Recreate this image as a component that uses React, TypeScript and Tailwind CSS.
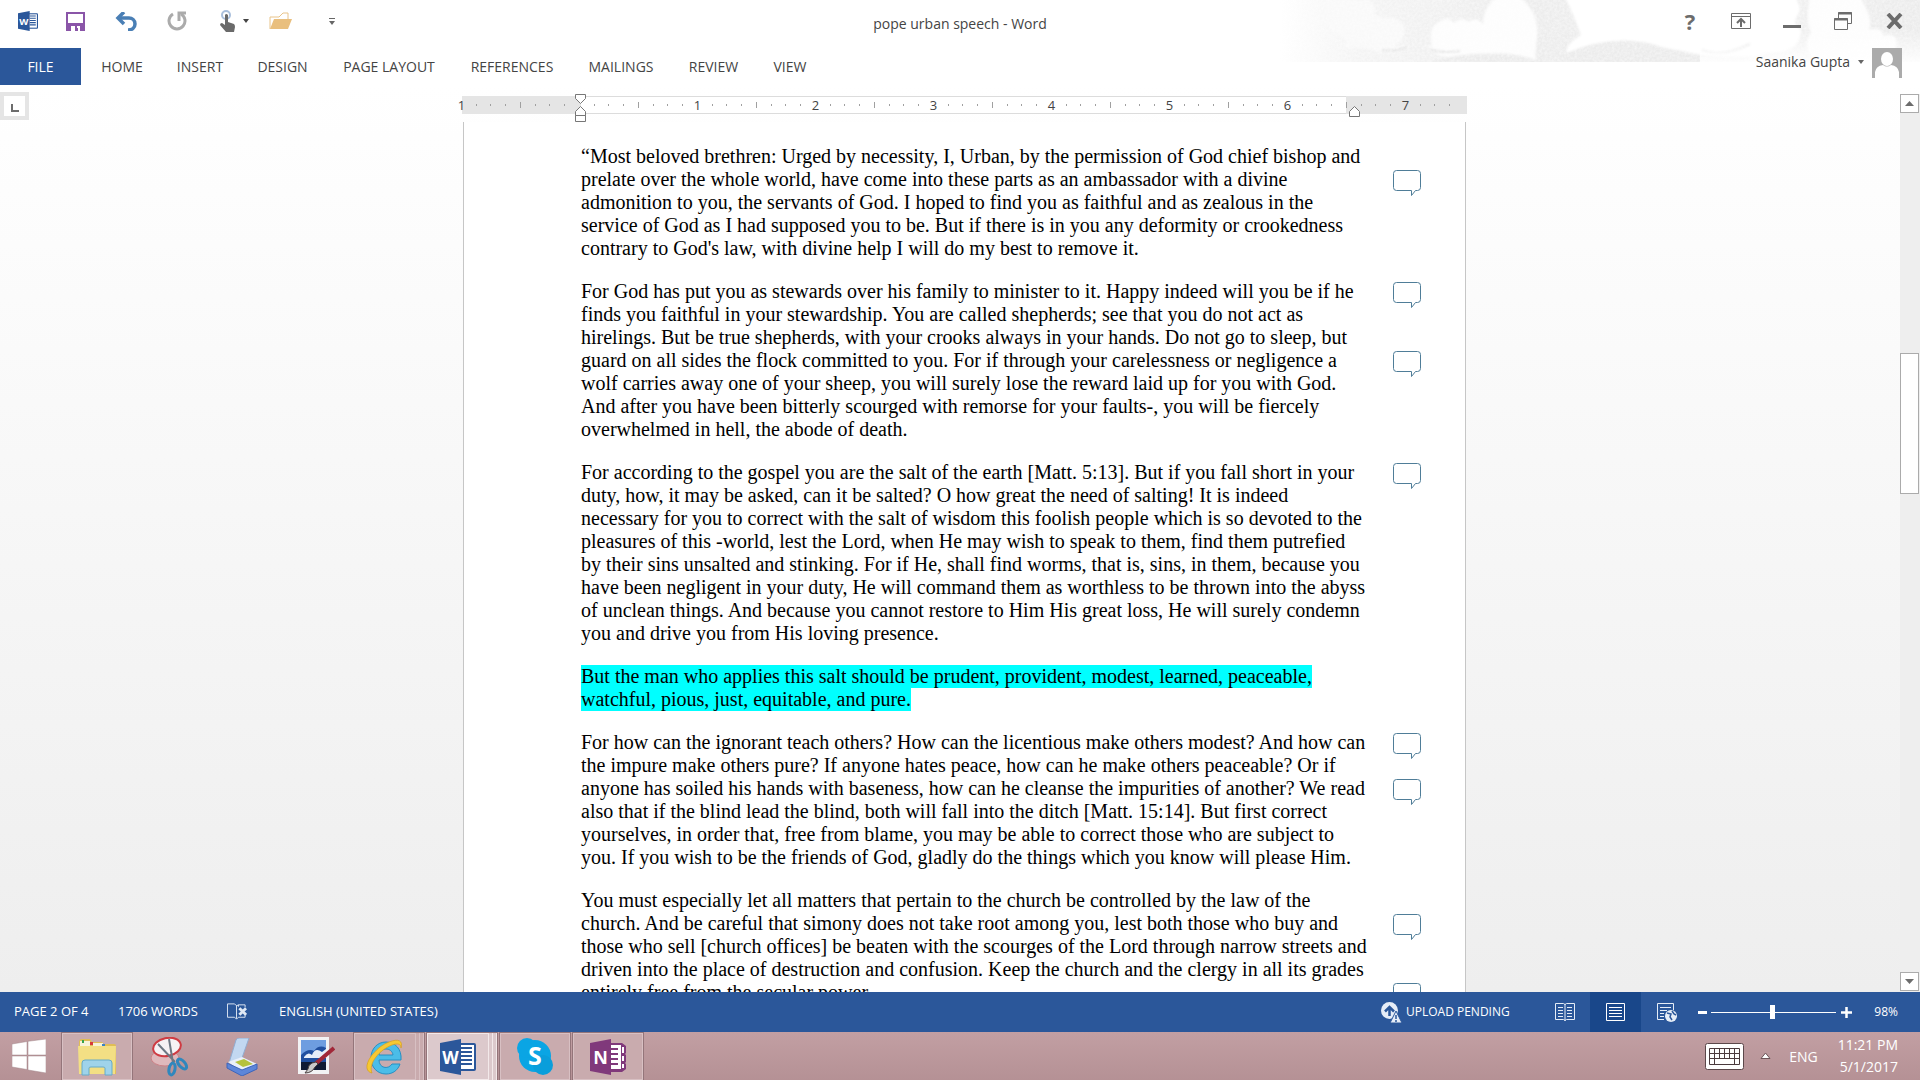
import type { ReactNode } from "react";

type Line = { text: string; comment?: boolean };
type Paragraph = { highlighted?: boolean; lines: Line[] };

const paragraphs: Paragraph[] = [
  {
    lines: [
      { text: "“Most beloved brethren: Urged by necessity, I, Urban, by the permission of God chief bishop and" },
      { text: "prelate over the whole world, have come into these parts as an ambassador with a divine", comment: true },
      { text: "admonition to you, the servants of God. I hoped to find you as faithful and as zealous in the" },
      { text: "service of God as I had supposed you to be. But if there is in you any deformity or crookedness" },
      { text: "contrary to God's law, with divine help I will do my best to remove it." },
    ],
  },
  {
    lines: [
      { text: "For God has put you as stewards over his family to minister to it. Happy indeed will you be if he", comment: true },
      { text: "finds you faithful in your stewardship. You are called shepherds; see that you do not act as" },
      { text: "hirelings. But be true shepherds, with your crooks always in your hands. Do not go to sleep, but" },
      { text: "guard on all sides the flock committed to you. For if through your carelessness or negligence a", comment: true },
      { text: "wolf carries away one of your sheep, you will surely lose the reward laid up for you with God." },
      { text: "And after you have been bitterly scourged with remorse for your faults-, you will be fiercely" },
      { text: "overwhelmed in hell, the abode of death." },
    ],
  },
  {
    lines: [
      { text: "For according to the gospel you are the salt of the earth [Matt. 5:13]. But if you fall short in your", comment: true },
      { text: "duty, how, it may be asked, can it be salted? O how great the need of salting! It is indeed" },
      { text: "necessary for you to correct with the salt of wisdom this foolish people which is so devoted to the" },
      { text: "pleasures of this -world, lest the Lord, when He may wish to speak to them, find them putrefied" },
      { text: "by their sins unsalted and stinking. For if He, shall find worms, that is, sins, in them, because you" },
      { text: "have been negligent in your duty, He will command them as worthless to be thrown into the abyss" },
      { text: "of unclean things. And because you cannot restore to Him His great loss, He will surely condemn" },
      { text: "you and drive you from His loving presence." },
    ],
  },
  {
    highlighted: true,
    lines: [
      { text: "But the man who applies this salt should be prudent, provident, modest, learned, peaceable," },
      { text: "watchful, pious, just, equitable, and pure." },
    ],
  },
  {
    lines: [
      { text: "For how can the ignorant teach others? How can the licentious make others modest? And how can", comment: true },
      { text: "the impure make others pure? If anyone hates peace, how can he make others peaceable? Or if" },
      { text: "anyone has soiled his hands with baseness, how can he cleanse the impurities of another? We read", comment: true },
      { text: "also that if the blind lead the blind, both will fall into the ditch [Matt. 15:14]. But first correct" },
      { text: "yourselves, in order that, free from blame, you may be able to correct those who are subject to" },
      { text: "you. If you wish to be the friends of God, gladly do the things which you know will please Him." },
    ],
  },
  {
    lines: [
      { text: "You must especially let all matters that pertain to the church be controlled by the law of the" },
      { text: "church. And be careful that simony does not take root among you, lest both those who buy and", comment: true },
      { text: "those who sell [church offices] be beaten with the scourges of the Lord through narrow streets and" },
      { text: "driven into the place of destruction and confusion. Keep the church and the clergy in all its grades" },
      { text: "entirely free from the secular power.", comment: true },
    ],
  },
];

const tabs = [
  { label: "HOME", width: "w-[76px]" },
  { label: "INSERT", width: "w-20" },
  { label: "DESIGN", width: "w-[85px]" },
  { label: "PAGE LAYOUT", width: "w-32" },
  { label: "REFERENCES", width: "w-[118px]" },
  { label: "MAILINGS", width: "w-[100px]" },
  { label: "REVIEW", width: "w-[85px]" },
  { label: "VIEW", width: "w-[68px]" },
];

const rulerLabels = ["1", "", "1", "2", "3", "4", "5", "6", "7"];

function IconButton({ label, className = "", children }: { label: string; className?: string; children: ReactNode }) {
  return (
    <button type="button" aria-label={label} className={`flex shrink-0 items-center justify-center ${className}`}>
      {children}
    </button>
  );
}

function WordLogo({ size }: { size: number }) {
  return (
    <svg width={size} height={size} viewBox="0 0 36 36" aria-hidden="true">
      <path d="M18 4h16a2 2 0 0 1 2 2v24a2 2 0 0 1-2 2H18z" fill="#2b579a" />
      <path d="M18 6h16v24H18z" fill="#fff" />
      <path d="M21 8h11v2H21zm0 4h11v2H21zm0 4h11v2H21zm0 4h11v2H21zm0 4h11v2H21z" fill="#2b579a" />
      <path d="M0 4 21 0v36L0 32z" fill="#2b579a" />
      <text x="10.5" y="24.5" textAnchor="middle" fontFamily="Open Sans" fontWeight="700" fontSize="17" fill="#fff">W</text>
    </svg>
  );
}

function OneNoteLogo() {
  return (
    <svg width="36" height="36" viewBox="0 0 36 36" aria-hidden="true">
      <path d="M18 4h14l4 3v7l-1 1 1 1v7l-1 1 1 1v5l-4 3H18z" fill="#80397b" />
      <path d="M20 6h11v24H20z" fill="#fff" />
      <path d="M20 9h8v2h-8zm0 5h8v2h-8zm0 5h8v2h-8zm0 5h8v2h-8z" fill="#80397b" />
      <path d="M32 8h2v6h-2zm0 9h2v5h-2zm0 8h2v4h-2z" fill="#fff" />
      <path d="M0 4 21 0v36L0 32z" fill="#80397b" />
      <text x="10.5" y="24.5" textAnchor="middle" fontFamily="Open Sans" fontWeight="700" fontSize="18" fill="#fff">N</text>
    </svg>
  );
}

function CloudArt() {
  return (
    <svg width="640" height="62" viewBox="0 0 640 62" className="pointer-events-none absolute right-0 top-0" aria-hidden="true">
      <defs>
        <linearGradient id="fade" x1="0" x2="1" y1="0" y2="0">
          <stop offset="0" stopColor="#fff" />
          <stop offset="0.12" stopColor="#f4f4f4" />
          <stop offset="0.4" stopColor="#ececec" />
          <stop offset="0.75" stopColor="#f1f1f1" />
          <stop offset="1" stopColor="#ebebeb" />
        </linearGradient>
        <linearGradient id="drop" x1="0" x2="0" y1="0" y2="1">
          <stop offset="0" stopColor="#fff" stopOpacity="0" />
          <stop offset="1" stopColor="#fff" stopOpacity="0.9" />
        </linearGradient>
        <filter id="grain" x="0" y="0" width="100%" height="100%">
          <feTurbulence type="fractalNoise" baseFrequency="0.4" numOctaves="2" />
          <feColorMatrix values="0 0 0 0 1  0 0 0 0 1  0 0 0 0 1  1.4 0 0 0 -0.4" />
        </filter>
        <filter id="soft"><feGaussianBlur stdDeviation="1" /></filter>
      </defs>
      <path d="M0 0h640v62H0z" fill="url(#fade)" />
      <g filter="url(#soft)">
        <path d="M42 0h48q7 8 4 17 7-3 10 2 8-4 14 2 8 4 6 14-1 6-10 11h16q-12 10-30 6-16-6-37-4 4-5 2-9Q36 22 42 0z" fill="#f9f9f9" />
        <path d="M240 -3q20 17 17 41-2 16-1 22-30-10-54-5-28 6-46-1-8-4-8-8h4q-4-20 7-24 8-7 15 1 8-7 15-1 8-6 14 3 0-18 14-28z" fill="#fdfdfd" />
        <path d="M285 -3h230q8 13 2 19-5 8 4 14 0 24-35 23-22 9-62 3-72-20-138-3 1-10 15-18-7-20-16-38z" fill="#fff" />
        <path d="M530 -3h50q14 23 9 33 12-4 15 6 11-4 13 6 0 15-24 20h-55q-18-12-7-30-6-12-1-35z" fill="#fdfdfd" />
        <path d="M422 50q20 8 48-6M150 49q12 5 30 2M102 50q14 2 25-3" fill="none" stroke="#e2e2e2" strokeWidth="2" />
        <path d="M286 53q54-22 98-5 36 10 86 9v5H280zM154 60q60-14 96 2H150z" fill="#ebebeb" />
      </g>
      <path d="M420 30h220v32H420z" fill="url(#drop)" />
      <path d="M0 0h640v62H0z" filter="url(#grain)" opacity="0.6" />
    </svg>
  );
}

function TitleBar() {
  return (
    <div className="flex h-12 items-center pb-3">
      <div className="flex h-full flex-1 items-center pl-3 pt-1.5">
        <IconButton label="Word" className="w-8"><WordLogo size={20} /></IconButton>
        <IconButton label="Save" className="ml-[15px] w-8">
          <svg width="19" height="19" viewBox="0 0 19 19">
            <path d="M0 0h19v19H0z" fill="#8a55a8" />
            <path d="M2 2h15v9H2zm3 12h9v5h-2v-3H9v3H5z" fill="#fff" />
            <path d="M9 14h2v4H9z" fill="#8a55a8" />
          </svg>
        </IconButton>
        <IconButton label="Undo" className="ml-[19px] w-8">
          <svg width="22" height="19" viewBox="0 0 22 19" fill="none" stroke="#4a7fb5" strokeWidth="3.5">
            <path d="M3 6h11c3 0 6 2 6 6s-3 6-7 6" />
            <path d="m9 0-6 6 6 6" />
          </svg>
        </IconButton>
        <IconButton label="Repeat" className="ml-[19px] w-8">
          <svg width="20" height="20" viewBox="0 0 20 20" fill="none" stroke="#ababab" strokeWidth="3">
            <path d="M6 3a8 8 0 1 0 8 0" />
            <path d="M12 10V2h7" />
          </svg>
        </IconButton>
        <IconButton label="Touch mode" className="ml-[23px] w-9 gap-2">
          <svg width="16" height="22" viewBox="0 0 16 22">
            <circle cx="7" cy="5" r="4" fill="none" stroke="#a9bfdc" strokeWidth="2" />
            <path d="M6 5q1-2 3 0v7l6 2q1 1 1 3l-1 5H7l-6-7q0-2 2-2l3 2z" fill="#6a6a6a" />
          </svg>
          <svg width="6" height="4" viewBox="0 0 6 4"><path d="M0 0h6L3 4z" fill="#444" /></svg>
        </IconButton>
        <IconButton label="Open" className="ml-3 w-8">
          <svg width="23" height="18" viewBox="0 0 23 18">
            <path d="M1 17V5h9l4-4h5v6" fill="none" stroke="#e9c48a" />
            <path d="M5 7h18l-4 10H1z" fill="#e9bf7e" />
          </svg>
        </IconButton>
        <IconButton label="Customize quick access toolbar" className="ml-[26px] w-5">
          <svg width="6" height="7" viewBox="0 0 6 7" fill="#666"><path d="M0 0h6v1H0zM0 3h6L3 7z" /></svg>
        </IconButton>
      </div>
      <h1 className="pt-3 text-[14px] leading-5">pope urban speech - Word</h1>
      <div className="relative flex h-full flex-1 items-center justify-end gap-[23px] pr-3 pt-1.5">
        <IconButton label="Help" className="w-7 text-[22px] font-bold leading-6 text-[#6c6c6c]">?</IconButton>
        <IconButton label="Ribbon display options" className="w-7">
          <svg width="20" height="16" viewBox="0 0 20 16" fill="none" stroke="#6c6c6c">
            <path d="M.5.5h19v15H.5zM0 3.5h20" />
            <path d="M10 14V6M6 10l4-4 4 4" strokeWidth="2" />
          </svg>
        </IconButton>
        <IconButton label="Minimize" className="w-7 pt-2.5">
          <span className="h-[3px] w-[18px] bg-[#6c6c6c]" />
        </IconButton>
        <IconButton label="Restore" className="w-7">
          <svg width="18" height="18" viewBox="0 0 18 18" fill="none" stroke="#6c6c6c">
            <path d="M4.5 6V.5h13v11H14M.5 6.5h13v11H.5z" />
            <path d="M4 1.5h14M0 7.5h14" strokeWidth="2" />
          </svg>
        </IconButton>
        <IconButton label="Close" className="w-7">
          <svg width="17" height="16" viewBox="0 0 17 16"><path d="m2 1 13 14M15 1 2 15" stroke="#6c6c6c" strokeWidth="4" /></svg>
        </IconButton>
      </div>
    </div>
  );
}

function RibbonTabs() {
  return (
    <div className="flex h-[37px]">
      <nav className="flex flex-1 text-[14px]">
        <button type="button" className="w-[81px] bg-[#2b579a] text-white">FILE</button>
        <div className="flex pl-[3px]">
          {tabs.map((tab) => (
            <button key={tab.label} type="button" className={`whitespace-nowrap ${tab.width}`}>
              {tab.label}
            </button>
          ))}
        </div>
      </nav>
      <button type="button" className="relative flex items-start gap-2 pr-[18px]">
        <span className="pt-0.5 text-[14px] leading-6">Saanika Gupta</span>
        <svg width="6" height="4" viewBox="0 0 6 4" className="mt-3"><path d="M0 0h6L3 4z" fill="#666" /></svg>
        <svg width="30" height="30" viewBox="0 0 30 30">
          <path d="M0 0h30v30H0z" fill="#ababab" />
          <ellipse cx="15" cy="11" rx="6" ry="7" fill="#fff" />
          <path d="M3 30V24q1-6 8-7 4 3 8 0 7 1 8 7v6z" fill="#fff" />
        </svg>
      </button>
    </div>
  );
}

function Ruler() {
  return (
    <div className="relative flex h-[18px] w-[1005px] shrink-0">
      <div className="w-[119px] bg-[#e5e5e5]" />
      <div className="flex-1 border-y border-[#dcdcdc] bg-white" />
      <div className="w-[121px] bg-[#e5e5e5]" />
      <div className="absolute inset-y-0 -left-2 right-1 flex overflow-hidden text-[13px] leading-[18px]">
        {rulerLabels.map((label, inch) => (
          <div key={inch} className="grid w-[118px] shrink-0 grid-cols-8 place-items-center">
            <span>{label}</span>
            {[1, 2, 3, 4, 5, 6, 7].map((eighth) => (
              <span key={eighth} className={eighth === 4 ? "h-1.5 w-px bg-[#a0a0a0]" : "h-0.5 w-px bg-[#a0a0a0]"} />
            ))}
          </div>
        ))}
      </div>
      <svg width="11" height="28" viewBox="0 0 11 28" className="absolute -top-0.5 left-[113px]" fill="#fff" stroke="#777">
        <path d="M.5.5h10v4l-5 5-5-5zM.5 21.5v-4l5-5 5 5v4zM.5 21.5h10v6H.5z" />
      </svg>
      <svg width="11" height="11" viewBox="0 0 11 11" className="absolute left-[887px] top-2.5" fill="#fff" stroke="#777">
        <path d="M.5 10.5v-5l5-5 5 5v5z" />
      </svg>
    </div>
  );
}

function CommentButton() {
  return (
    <button type="button" aria-label="Show comment" className="absolute left-[812px] top-0.5">
      <svg width="28" height="27" viewBox="0 0 28 27" fill="none" stroke="#4f7d98">
        <path d="M3.5.5h21q3 0 3 3v14q0 3-3 3h-2l-4 5v-5h-15q-3 0-3-3v-14q0-3 3-3z" />
      </svg>
    </button>
  );
}

function Page() {
  return (
    <article className="mt-2 flex w-[1003px] flex-1 flex-col gap-5 overflow-hidden border-x border-[#c6c6c6] bg-white pl-[117px] pt-[23px] font-['Liberation_Serif',serif] text-[20px] leading-[23px] text-black">
      {paragraphs.map((paragraph, index) => (
        <p key={index}>
          {paragraph.lines.map((line) => (
            <span key={line.text} className="relative block whitespace-nowrap">
              <span className={paragraph.highlighted ? "inline-block bg-[#00ffff]" : ""}>{line.text}</span>
              {line.comment ? <CommentButton /> : null}
            </span>
          ))}
        </p>
      ))}
    </article>
  );
}

function ScrollBar() {
  return (
    <div className="mb-px mt-[9px] flex w-5 flex-col bg-[#eeeeee]">
      <IconButton label="Scroll up" className="h-[19px] w-[19px] border border-[#ababab] bg-white">
        <svg width="9" height="5" viewBox="0 0 9 5"><path d="M0 5h9L4.5 0z" fill="#6c6c6c" /></svg>
      </IconButton>
      <div className="flex flex-1 flex-col">
        <div className="grow-[240]" />
        <div className="w-[19px] grow-[139] border border-[#ababab] bg-white" />
        <div className="grow-[477]" />
      </div>
      <IconButton label="Scroll down" className="h-[19px] w-[19px] border border-[#ababab] bg-white">
        <svg width="9" height="5" viewBox="0 0 9 5"><path d="M0 0h9L4.5 5z" fill="#6c6c6c" /></svg>
      </IconButton>
    </div>
  );
}

function StatusBar() {
  return (
    <footer className="flex h-10 shrink-0 items-center bg-[#2b579a] pl-3.5 text-[12px] text-white">
      <span className="w-[104px] text-[13px]">PAGE 2 OF 4</span>
      <span className="w-[109px] text-[13px]">1706 WORDS</span>
      <IconButton label="Proofing errors" className="w-5">
        <svg width="21" height="18" viewBox="0 0 21 18" fill="none" stroke="#dfe8f4">
          <path d="M12 3.5V1.5l-2 1-2-2H.5v14H8l2 2 2-2h7v-3M10 2v14M12 1.5h7V4" />
          <path d="m13 5 7 7m0-7-7 7" strokeWidth="3" />
        </svg>
      </IconButton>
      <span className="flex-1 pl-8 text-[13px]">ENGLISH (UNITED STATES)</span>
      <button type="button" className="flex items-center gap-1">
        <svg width="21" height="21" viewBox="0 0 21 21">
          <circle cx="8.5" cy="8.5" r="8.5" fill="#e6edf7" />
          <path d="M8.5 14V6M4 9.5 8.5 5l4.5 4.5" fill="none" stroke="#2b579a" strokeWidth="2.5" />
          <path d="m15 9 6 12H9z" fill="#e6edf7" stroke="#2b579a" />
          <path d="M15 13v4m0 1v2" stroke="#2b579a" strokeWidth="1.5" />
        </svg>
        <span className="w-[107px] whitespace-nowrap text-left">UPLOAD PENDING</span>
      </button>
      <IconButton label="Read mode" className="ml-[26px] h-full w-[51px]">
        <svg width="20" height="20" viewBox="0 0 20 20" fill="none" stroke="#e6edf7">
          <path d="M.5 1.5h8l1.5 1 1.5-1h8v16h-8l-1.5 1-1.5-1h-8zM10 2v17M3 5.5h5m-5 3h5m-5 3h5m-5 3h5M12 5.5h5m-5 3h5m-5 3h5m-5 3h5" />
        </svg>
      </IconButton>
      <IconButton label="Print layout" className="h-full w-[51px] bg-[#19478a]">
        <svg width="19" height="18" viewBox="0 0 19 18" fill="none" stroke="#fff">
          <path d="M.5.5h18v17H.5zM3 4.5h13M3 7.5h13m-13 3h13m-13 3h13" />
        </svg>
      </IconButton>
      <IconButton label="Web layout" className="h-full w-[51px]">
        <svg width="20" height="19" viewBox="0 0 20 19" fill="none" stroke="#e6edf7">
          <path d="M7 16.5H.5V.5h16V7M3 4.5h11m-11 3h7m-7 3h4m-4 3h4" />
          <circle cx="14" cy="13" r="6" fill="#e6edf7" stroke="none" />
          <path d="m10 10 4 1-1 3 2 3M15 8l2 3 2 1" stroke="#2b579a" strokeWidth="1.5" />
        </svg>
      </IconButton>
      <IconButton label="Zoom out" className="ml-1.5 w-[9px]"><span className="h-[3px] w-[9px] bg-white" /></IconButton>
      <input
        type="range"
        aria-label="Zoom"
        defaultValue={49}
        className="mx-1 h-3.5 w-[125px] appearance-none bg-[linear-gradient(white,white)] bg-[length:100%_1px] bg-center bg-no-repeat [&::-webkit-slider-thumb]:h-3.5 [&::-webkit-slider-thumb]:w-[5px] [&::-webkit-slider-thumb]:appearance-none [&::-webkit-slider-thumb]:bg-white"
      />
      <IconButton label="Zoom in" className="w-3">
        <svg width="11" height="11" viewBox="0 0 11 11"><path d="M5.5 0v11M0 5.5h11" stroke="#fff" strokeWidth="2.5" /></svg>
      </IconButton>
      <button type="button" className="w-[68px] pr-[22px] text-right">98%</button>
    </footer>
  );
}

function TaskButton({ label, open, active, stacked, children }: { label: string; open?: boolean; active?: boolean; stacked?: boolean; children: ReactNode }) {
  const frame = active ? "border-[#f3e9ea] bg-[#dcc9cc]" : open ? "border-[#d8c0c3] bg-[#c9abae]" : "border-transparent";
  return (
    <button type="button" aria-label={label} className={`flex h-full w-[70px] shrink-0 outline-1 ${open || active ? "outline-[#94757a]" : "outline-transparent"}`}>
      <span className={`flex h-full flex-1 items-center justify-center border ${frame}`}>{children}</span>
      {stacked ? (
        <>
          <span className={`h-full w-1 border-r ${frame}`} />
          <span className={`h-full w-1 border-r ${frame}`} />
        </>
      ) : null}
    </button>
  );
}

function TaskBar() {
  return (
    <div className="flex h-12 shrink-0 items-center bg-linear-to-b from-[#c29fa3] to-[#b59195] text-white">
      <IconButton label="Start" className="h-full w-[62px] pr-1">
        <svg width="34" height="34" viewBox="0 0 34 34" fill="#fff" stroke="#a18488" strokeWidth=".5">
          <path d="m0 5 15-2.5V16H0zM16 2.3 34 0v16H16zM0 17h15v13.5L0 28zM16 17h18v17l-18-3z" />
        </svg>
      </IconButton>
      <div className="flex h-full gap-[3px] pt-px">
        <TaskButton label="File Explorer" open>
          <svg width="40" height="39" viewBox="0 0 40 39">
            <path d="M2 5q0-3 3-3h8l2 3h10l2 2h10q2 0 2 2v28H2z" fill="#e0bd55" />
            <path d="M3 4h10v6H3zM16 6h10v5H16z" fill="#f7f3d8" />
            <path d="M5 3h2v3H5z" fill="#37a34a" /><path d="M13 5h3v3h-3z" fill="#d83b3b" /><path d="M25 7h3v3h-3z" fill="#3a83c8" />
            <path d="M1 9h38l-1 28H2z" fill="#f3df84" />
            <path d="M5 38V26q0-3 3-3h24q3 0 3 3v12h-7v-7q0-1-2-1H14q-2 0-2 1v7z" fill="#9fd3ea" stroke="#67abc9" />
          </svg>
        </TaskButton>
        <TaskButton label="Snipping Tool">
          <svg width="40" height="40" viewBox="0 0 40 40">
            <ellipse cx="15" cy="21" rx="14" ry="8" fill="#dfb9bc" stroke="#cc8287" />
            <ellipse cx="17" cy="10" rx="14" ry="9" fill="#f6f2f4" stroke="#cf3b42" strokeWidth="2" transform="rotate(-12 17 10)" />
            <path d="m8 7 17 18M19 2l4 24" stroke="#6e7883" strokeWidth="2" />
            <ellipse cx="22" cy="32" rx="3" ry="6" fill="none" stroke="#2f87bd" strokeWidth="3" transform="rotate(12 22 32)" />
            <ellipse cx="32" cy="27" rx="3" ry="6" fill="none" stroke="#2f87bd" strokeWidth="3" transform="rotate(-42 32 27)" />
          </svg>
        </TaskButton>
        <TaskButton label="Scanner">
          <svg width="34" height="38" viewBox="0 0 34 38">
            <path d="M10 2q1-2 3-2h10l-7 20L3 25z" fill="#c2d8f1" stroke="#91acd0" />
            <path d="m2 24 14-5 15 7-16 7z" fill="#e9f0fa" />
            <path d="m9 24 9-3 9 5-10 3z" fill="#b5c23e" />
            <path d="m1 25 15 7 15-6v5l-15 7L1 30z" fill="#5d86d9" stroke="#3d65bb" />
          </svg>
        </TaskButton>
        <TaskButton label="Journal">
          <svg width="37" height="39" viewBox="0 0 37 39">
            <path d="M0 0h31v37H0z" fill="#f2f2f4" />
            <path d="M3 3h25v30H3z" fill="#214f9f" />
            <path d="M3 3h25v8q-7-4-12 3-6-3-13 4z" fill="#6e9de0" />
            <path d="M6 20q4-6 8-2 3-8 10-3l4-3v9H6z" fill="#e7eef9" />
            <path d="M3 25h25v8H3z" fill="#101a33" />
            <path d="m36 11-21 18" stroke="#a12738" strokeWidth="4" />
            <path d="m18 25-4 1q-4 2-4 6l-3 4q7 0 10-6l3-3z" fill="#c9c9c9" stroke="#4a4040" />
          </svg>
        </TaskButton>
        <TaskButton label="Internet Explorer" open stacked>
          <svg width="40" height="38" viewBox="0 0 40 38">
            <path d="M21 4C12 4 6 11 6 20s6 16 15 16c7 0 12-4 14-10h-8c-4 6-13 4-13-4h22C37 11 30 4 21 4zm-7 13c1-8 13-8 14 0z" fill="#4bbde8" stroke="#2590c4" />
            <path d="M7 35C-6 32 8 10 24 4c10-4 14-1 12 6 0-4-3-5-9-3C14 12 3 26 7 35z" fill="#f6c832" stroke="#d79e1d" strokeWidth=".7" />
          </svg>
        </TaskButton>
        <TaskButton label="Word" active stacked><WordLogo size={36} /></TaskButton>
        <TaskButton label="Skype" open>
          <svg width="36" height="37" viewBox="0 0 36 37">
            <circle cx="18" cy="18" r="16" fill="#0aa5e4" />
            <circle cx="10" cy="10" r="10" fill="#0aa5e4" />
            <circle cx="26" cy="27" r="10" fill="#0a9edb" />
            <text x="18" y="27" textAnchor="middle" fontFamily="Open Sans" fontWeight="700" fontSize="25" fill="#fff">S</text>
          </svg>
        </TaskButton>
        <TaskButton label="OneNote" open><OneNoteLogo /></TaskButton>
      </div>
      <div className="flex flex-1 items-center justify-end pr-[22px] text-[14px]">
        <IconButton label="Touch keyboard">
          <svg width="39" height="27" viewBox="0 0 39 27">
            <rect x=".5" y=".5" width="38" height="26" rx="2" fill="#fff" stroke="#5b474a" />
            <path d="M4.5 5.5h30v16h-30zM4 10.5h31M4 15.5h31M9.5 5v16M14.5 5v11M19.5 5v11M24.5 5v11M29.5 5v16" fill="none" stroke="#4a3a3d" />
          </svg>
        </IconButton>
        <IconButton label="Show hidden icons" className="ml-4">
          <svg width="11" height="8" viewBox="0 0 11 8"><path d="M1 6.5h9L5.500 1z" fill="#fff" stroke="#6d5558" /></svg>
        </IconButton>
        <button type="button" className="ml-[18px]">ENG</button>
        <button type="button" className="ml-5 text-right leading-[22px]">
          <span className="block">11:21 PM</span>
          <span className="block">5/1/2017</span>
        </button>
      </div>
    </div>
  );
}

export default function App() {
  return (
    <div className="flex h-screen flex-col overflow-hidden bg-white font-['Open_Sans',sans-serif] text-[#444444]">
      <header className="relative shrink-0">
        <CloudArt />
        <TitleBar />
        <RibbonTabs />
      </header>
      <main className="flex min-h-0 flex-1 bg-linear-to-b from-[#ffffff] to-[#eeeeee]">
        <div className="w-[29px] shrink-0 pt-[7px]">
          <IconButton label="Tab selector" className="h-7 w-[29px] border-4 border-[#e5e5e5] bg-white">
            <span className="mt-1 h-2 w-2 border-b-2 border-l-2 border-[#6c6c6c]" />
          </IconButton>
        </div>
        <div className="flex min-w-0 flex-1 flex-col items-center pt-[11px]">
          <Ruler />
          <Page />
        </div>
        <ScrollBar />
      </main>
      <StatusBar />
      <TaskBar />
    </div>
  );
}
